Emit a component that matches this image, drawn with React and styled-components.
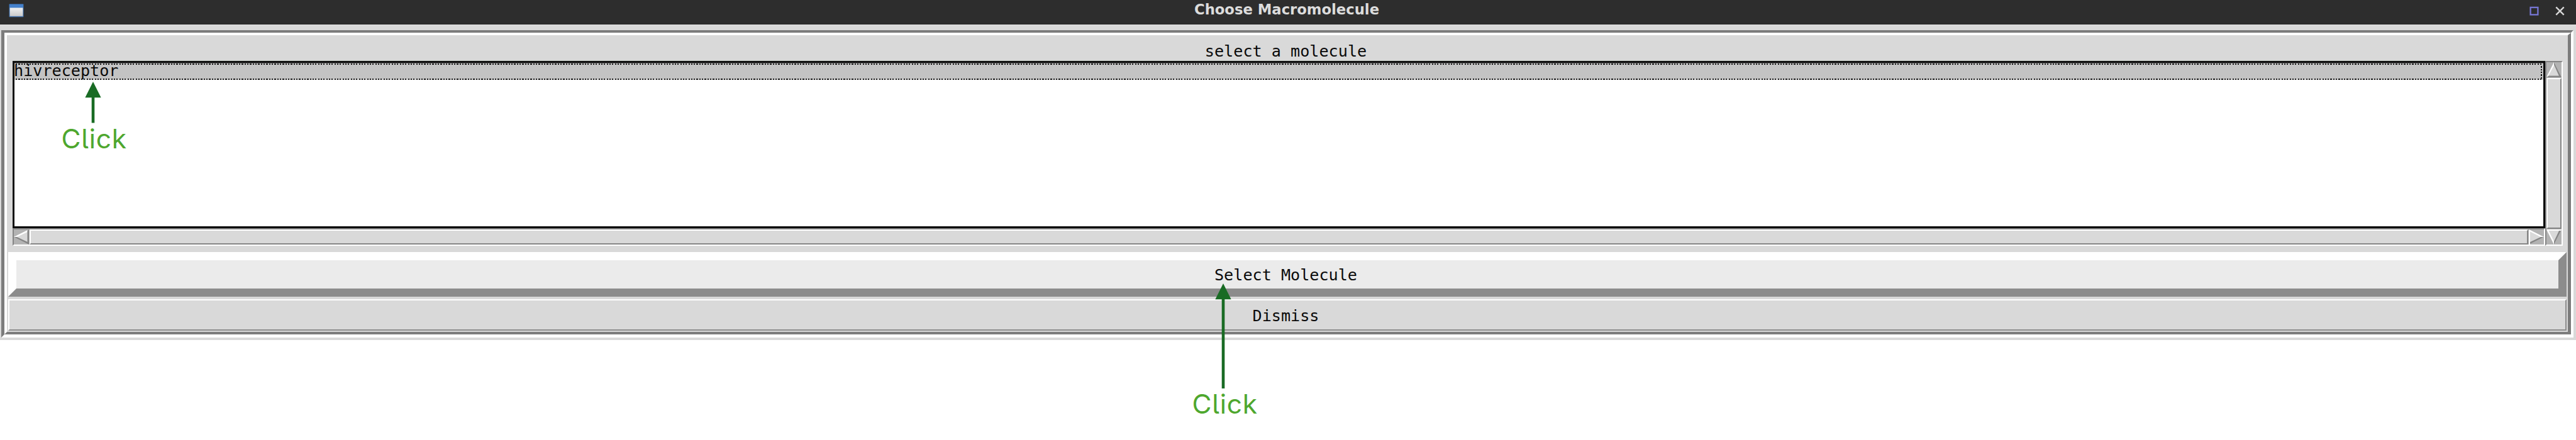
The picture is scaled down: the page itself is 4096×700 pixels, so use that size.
import React from "react";
import styled, { createGlobalStyle } from "styled-components";

const GlobalStyle = createGlobalStyle`
  * { box-sizing: border-box; }
  html, body { margin: 0; background: #fff; overflow: hidden; }
`;

const face = "#d9d9d9";
const shade = "#7c7c7c";
const edge = "#858585";

const Screen = styled.main`
  position: relative;
  width: 4096px;
  height: 700px;
  background: #fff;
`;

const Window = styled.section`
  display: flex;
  flex-direction: column;
  width: 4096px;
  height: 541px;
  background: ${face};
`;

const TitleBar = styled.header`
  display: grid;
  grid-template-columns: 1fr auto 1fr;
  height: 39px;
  flex: none;
  padding: 0 18px 0 14px;
  background: #2d2d2d;
  border-bottom: 1px solid #262626;
  box-shadow: 0 1px 0 #e6e6e6;
`;

const AppIcon = styled.svg`
  display: block;
  margin-top: 6px;
`;

const Title = styled.h1`
  margin: 0;
  color: #dcdcdc;
  font: bold 22.7px/31px "DejaVu Sans", sans-serif;
  white-space: nowrap;
`;

const Controls = styled.div`
  display: flex;
  justify-content: flex-end;
  gap: 26px;
  padding-top: 10px;
`;

const Groove = styled.div`
  flex: none;
  height: 489px;
  margin: 9px 4px 0 2px;
  border: solid;
  border-width: 4px 4px 5px 5px;
  border-color: ${shade} #fff #fff ${shade};
`;

const Panel = styled.div`
  display: flex;
  flex-direction: column;
  height: 100%;
  padding: 0 2px;
  border: solid;
  border-width: 4px 5px 4px 4px;
  border-color: #fff ${shade} ${shade} #fff;
`;

const Mono = styled.span`
  color: #0a0a0a;
  font: 25.15px/30px "DejaVu Sans Mono", monospace;
  white-space: pre;
`;

const Label = styled.div`
  display: flex;
  justify-content: center;
  height: 41px;
  padding: 11px 5px 0 0;
`;

const ListArea = styled.div`
  display: grid;
  grid-template-columns: 4027px 28px;
  grid-template-rows: 266px 28px;
  margin: 0 0 10px 7px;
`;

const ListBox = styled.div`
  border: 3px solid #0c0c0c;
  background: #fff;
  box-shadow: 0 -1px 0 #c4cbc4;
`;

const dots = (angle) =>
  `repeating-linear-gradient(${angle}, #141414 0 2.2px, #c3c3c3 2.2px 4.33px)`;

const ListItem = styled.div`
  display: flex;
  height: 27px;
  border-top: 1px solid #7f7f7f;
  background:
    ${dots("90deg")} 2px 0 / 4017px 2px no-repeat,
    ${dots("90deg")} 2px 100% / 4017px 2px no-repeat,
    ${dots("180deg")} 4017px 0 / 2px 100% no-repeat,
    #c3c3c3;
`;

const ItemText = styled(Mono)`
  margin: -3px 0 0 -1px;
`;

const Scrollbar = styled.div`
  display: flex;
  flex-direction: ${(p) => (p.$vertical ? "column" : "row")};
  grid-row: ${(p) => (p.$vertical ? "1 / 3" : "2")};
  grid-column: ${(p) => (p.$vertical ? "2" : "1")};
  gap: 1px;
  border: 2px solid;
  border-color: ${edge} #fff #fff ${edge};
  background: #b3b3b3;
`;

const Thumb = styled.div`
  flex: 1;
  border: 2px solid;
  border-color: #fff ${edge} ${edge} #fff;
  background: ${face};
`;

const ArrowIcon = styled.svg`
  display: block;
  flex: none;
`;

const Button = styled.button`
  display: flex;
  align-items: center;
  justify-content: center;
  flex: none;
  height: ${(p) => (p.$primary ? 71 : 50)}px;
  margin: 0 0 ${(p) => (p.$primary ? 4 : 0)}px;
  padding: 3px 5px 0 0;
  border: ${(p) => (p.$primary ? 13 : 2)}px solid;
  border-color: #fff #8c8c8c #8c8c8c #fff;
  border-radius: 0;
  background: ${(p) => (p.$primary ? "#ebebeb" : face)};
`;

const Callout = styled.div`
  position: absolute;
  left: ${(p) => p.$x}px;
  top: ${(p) => p.$y}px;
  width: 110px;
`;

const Pointer = styled.svg`
  display: block;
  margin-left: ${(p) => p.$indent}px;
`;

const Caption = styled.div`
  color: #4ea72e;
  font: 42.4px/50px Inter, sans-serif;
  font-feature-settings: "cv05" 1;
  letter-spacing: 0.8px;
`;

function ScrollArrow({ dir }) {
  const fills = {
    left: [
      ["24,0 24,24 0,12", face],
      ["0,12 24,0 24,3 5,12", "#fff"],
      ["0,12 24,24 24,21 5,12", edge],
      ["24,0 24,24 21.5,22.5 21.5,1.5", edge],
    ],
    right: [
      ["0,0 0,24 24,12", face],
      ["0,24 24,12 19,12 0,21", edge],
      ["0,0 24,12 19,12 2,3.5 2,24 0,24", "#fff"],
    ],
    up: [
      ["0,24 12,0 24,24", face],
      ["12,0 24,24 21,24 12,4", edge],
      ["0,24 24,24 22.5,21.5 1.5,21.5", edge],
      ["0,24 12,0 12,5 3,22", "#fff"],
    ],
    down: [
      ["0,0 24,0 12,24", face],
      ["24,0 12,24 12,19 21,0", edge],
      ["0,0 24,0 23,2 3.5,2 12,19 12,24", "#fff"],
    ],
  };
  return (
    <ArrowIcon width="24" height="24" viewBox="0 0 24 24">
      {fills[dir].map(([points, fill], i) => (
        <polygon key={i} points={points} fill={fill} />
      ))}
    </ArrowIcon>
  );
}

function ClickHint({ x, y, indent, length }) {
  return (
    <Callout $x={x} $y={y}>
      <Pointer $indent={indent} width="26" height={length} fill="#196b24">
        <polygon points="13,0 25.6,25.3 0.4,25.3" />
        <rect x="10.7" y="25" width="4.6" height={length - 25} />
      </Pointer>
      <Caption>Click</Caption>
    </Callout>
  );
}

export default function App() {
  return (
    <Screen>
      <GlobalStyle />
      <Window>
        <TitleBar>
          <AppIcon width="24" height="22" viewBox="0 0 24 22">
            <defs>
              <linearGradient id="pane" x1="0" y1="0" x2="0" y2="1">
                <stop offset="0" stopColor="#f0f0f0" />
                <stop offset="1" stopColor="#cacaca" />
              </linearGradient>
            </defs>
            <rect x="0.5" y="0.3" width="23" height="21" rx="1" fill="#3d6da8" />
            <rect x="1.3" y="1" width="21.4" height="5.6" fill="#4480cb" />
            <rect x="1.6" y="6.4" width="20.8" height="13.4" fill="url(#pane)" />
          </AppIcon>
          <Title>Choose Macromolecule</Title>
          <Controls>
            <svg width="15" height="15" viewBox="0 0 15 15">
              <rect x="1.6" y="1.8" width="11.8" height="11.6" fill="none" stroke="#7777d6" strokeWidth="2.3" />
            </svg>
            <svg width="15" height="15" viewBox="0 0 15 15">
              <path d="M1.3 1.3 13.7 13.7M13.7 1.3 1.3 13.7" stroke="#d8d8d8" strokeWidth="2.4" />
            </svg>
          </Controls>
        </TitleBar>
        <Groove>
          <Panel>
            <Label>
              <Mono>select a molecule</Mono>
            </Label>
            <ListArea>
              <ListBox>
                <ListItem>
                  <ItemText>hivreceptor</ItemText>
                </ListItem>
              </ListBox>
              <Scrollbar>
                <ScrollArrow dir="left" />
                <Thumb />
                <ScrollArrow dir="right" />
              </Scrollbar>
              <Scrollbar $vertical>
                <ScrollArrow dir="up" />
                <Thumb />
                <ScrollArrow dir="down" />
              </Scrollbar>
            </ListArea>
            <Button $primary>
              <Mono>Select Molecule</Mono>
            </Button>
            <Button>
              <Mono>Dismiss</Mono>
            </Button>
          </Panel>
        </Groove>
      </Window>
      <ClickHint x={97.5} y={130} indent={37} length={65.5} />
      <ClickHint x={1895.5} y={451} indent={36.5} length={167} />
    </Screen>
  );
}
